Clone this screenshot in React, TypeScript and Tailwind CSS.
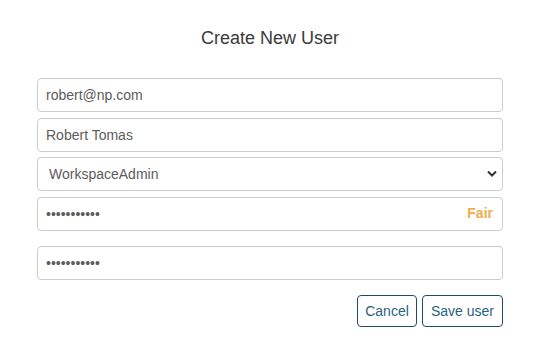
import { useState } from "react";

export default function App() {
  const [email, setEmail] = useState("robert@np.com");
  const [name, setName] = useState("Robert Tomas");
  const [role, setRole] = useState("WorkspaceAdmin");
  const [password, setPassword] = useState("12345678901");
  const [confirm, setConfirm] = useState("12345678901");

  const inputClass =
    "block w-full h-[34px] rounded-[4px] border border-[#cccccc] bg-white px-[8px] text-[14px] text-[#5c5c5c] outline-none";

  return (
    <div className="w-[550px] h-[357px] bg-white font-['Liberation_Sans',Arial,sans-serif]">
      <div className="ml-[37px] w-[466px] pt-[28px]">
        {/* Title */}
        <h1 className="text-center text-[18px] leading-[20px] text-[#3a3a3a]">
          Create New User
        </h1>

        <form className="mt-[30px]" onSubmit={(e) => e.preventDefault()}>
          <input
            className={inputClass}
            value={email}
            onChange={(e) => setEmail(e.target.value)}
          />
          <input
            className={`${inputClass} mt-[6px]`}
            value={name}
            onChange={(e) => setName(e.target.value)}
          />

          {/* Role select */}
          <div className="relative mt-[5px]">
            <select
              className={`${inputClass} appearance-none pl-[11px]`}
              value={role}
              onChange={(e) => setRole(e.target.value)}
            >
              <option>WorkspaceAdmin</option>
              <option>WorkspaceUser</option>
              <option>Viewer</option>
            </select>
            <svg
              className="pointer-events-none absolute right-[6px] top-[13px] w-[10px] h-[8px]"
              viewBox="0 0 10 8"
              fill="none"
            >
              <path
                d="M1 1.5 L5 5.5 L9 1.5"
                stroke="#333333"
                strokeWidth="2"
              />
            </svg>
          </div>

          {/* Password with strength */}
          <div className="relative mt-[6px]">
            <input
              type="password"
              className={`${inputClass} pr-[50px]`}
              value={password}
              onChange={(e) => setPassword(e.target.value)}
            />
            <span className="pointer-events-none absolute right-[10px] top-[8px] text-[14px] leading-[17px] font-bold text-[#f0ad4e]">
              Fair
            </span>
          </div>

          <input
            type="password"
            className={`${inputClass} mt-[15px]`}
            value={confirm}
            onChange={(e) => setConfirm(e.target.value)}
          />

          {/* Actions */}
          <div className="mt-[15px] flex justify-end gap-[5px]">
            <button
              type="button"
              className="h-[32px] w-[60px] rounded-[4px] border border-[#1b4d6b] bg-white text-[14px] text-[#2a6183]"
            >
              Cancel
            </button>
            <button
              type="submit"
              className="h-[32px] w-[81px] rounded-[4px] border border-[#1b4d6b] bg-white text-[14px] text-[#2a6183]"
            >
              Save user
            </button>
          </div>
        </form>
      </div>
    </div>
  );
}
